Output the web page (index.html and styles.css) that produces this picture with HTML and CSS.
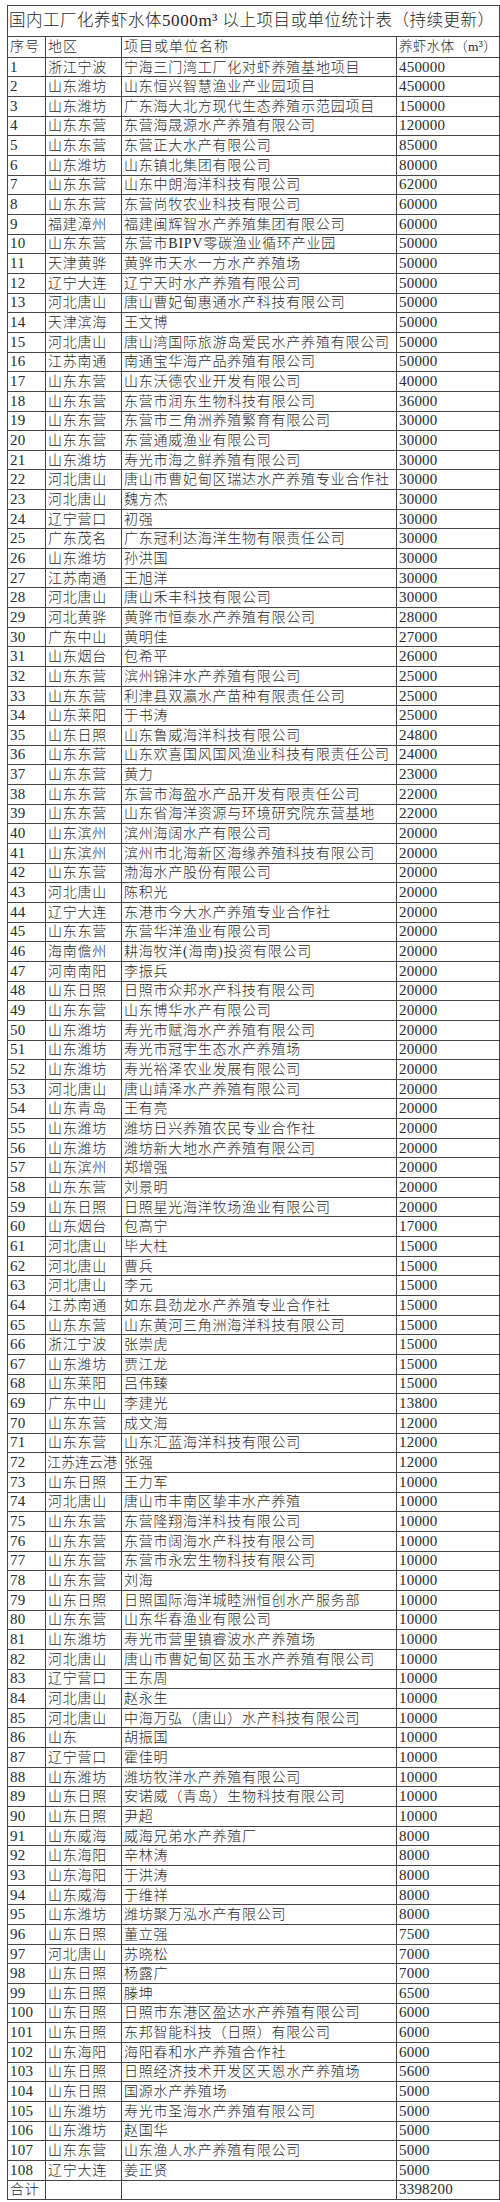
FILE: index.html
```html
<!DOCTYPE html>
<html lang="zh-CN">
<head>
<meta charset="utf-8">
<title>国内工厂化养虾水体5000m³以上项目或单位统计表</title>
<link rel="stylesheet" href="styles.css">
</head>
<body>
<table class="sheet">
<colgroup><col class="c1"><col class="c2"><col class="c3"><col class="c4"></colgroup>
<tbody>
<tr class="title-row"><td colspan="4" class="title">国内工厂化养虾水体<span class="tnum">5000m³</span> 以上项目或单位统计表（持续更新）</td></tr>
<tr class="head"><td>序号</td><td>地区</td><td>项目或单位名称</td><td class="hv">养虾水体（m³）</td></tr>
<tr><td class="n">1</td><td>浙江宁波</td><td>宁海三门湾工厂化对虾养殖基地项目</td><td class="n">450000</td></tr>
<tr><td class="n">2</td><td>山东潍坊</td><td>山东恒兴智慧渔业产业园项目</td><td class="n">450000</td></tr>
<tr><td class="n">3</td><td>山东潍坊</td><td>广东海大北方现代生态养殖示范园项目</td><td class="n">150000</td></tr>
<tr><td class="n">4</td><td>山东东营</td><td>东营海晟源水产养殖有限公司</td><td class="n">120000</td></tr>
<tr><td class="n">5</td><td>山东东营</td><td>东营正大水产有限公司</td><td class="n">85000</td></tr>
<tr><td class="n">6</td><td>山东潍坊</td><td>山东镇北集团有限公司</td><td class="n">80000</td></tr>
<tr><td class="n">7</td><td>山东东营</td><td>山东中朗海洋科技有限公司</td><td class="n">62000</td></tr>
<tr><td class="n">8</td><td>山东东营</td><td>东营尚牧农业科技有限公司</td><td class="n">60000</td></tr>
<tr><td class="n">9</td><td>福建漳州</td><td>福建闽辉智水产养殖集团有限公司</td><td class="n">60000</td></tr>
<tr><td class="n">10</td><td>山东东营</td><td>东营市BIPV零碳渔业循环产业园</td><td class="n">50000</td></tr>
<tr><td class="n">11</td><td>天津黄骅</td><td>黄骅市天水一方水产养殖场</td><td class="n">50000</td></tr>
<tr><td class="n">12</td><td>辽宁大连</td><td>辽宁天时水产养殖有限公司</td><td class="n">50000</td></tr>
<tr><td class="n">13</td><td>河北唐山</td><td>唐山曹妃甸惠通水产科技有限公司</td><td class="n">50000</td></tr>
<tr><td class="n">14</td><td>天津滨海</td><td>王文博</td><td class="n">50000</td></tr>
<tr><td class="n">15</td><td>河北唐山</td><td>唐山湾国际旅游岛爱民水产养殖有限公司</td><td class="n">50000</td></tr>
<tr><td class="n">16</td><td>江苏南通</td><td>南通宝华海产品养殖有限公司</td><td class="n">50000</td></tr>
<tr><td class="n">17</td><td>山东东营</td><td>山东沃德农业开发有限公司</td><td class="n">40000</td></tr>
<tr><td class="n">18</td><td>山东东营</td><td>东营市润东生物科技有限公司</td><td class="n">36000</td></tr>
<tr><td class="n">19</td><td>山东东营</td><td>东营市三角洲养殖繁育有限公司</td><td class="n">30000</td></tr>
<tr><td class="n">20</td><td>山东东营</td><td>东营通威渔业有限公司</td><td class="n">30000</td></tr>
<tr><td class="n">21</td><td>山东潍坊</td><td>寿光市海之鲜养殖有限公司</td><td class="n">30000</td></tr>
<tr><td class="n">22</td><td>河北唐山</td><td>唐山市曹妃甸区瑞达水产养殖专业合作社</td><td class="n">30000</td></tr>
<tr><td class="n">23</td><td>河北唐山</td><td>魏方杰</td><td class="n">30000</td></tr>
<tr><td class="n">24</td><td>辽宁营口</td><td>初强</td><td class="n">30000</td></tr>
<tr><td class="n">25</td><td>广东茂名</td><td>广东冠利达海洋生物有限责任公司</td><td class="n">30000</td></tr>
<tr><td class="n">26</td><td>山东潍坊</td><td>孙洪国</td><td class="n">30000</td></tr>
<tr><td class="n">27</td><td>江苏南通</td><td>王旭洋</td><td class="n">30000</td></tr>
<tr><td class="n">28</td><td>河北唐山</td><td>唐山禾丰科技有限公司</td><td class="n">30000</td></tr>
<tr><td class="n">29</td><td>河北黄骅</td><td>黄骅市恒泰水产养殖有限公司</td><td class="n">28000</td></tr>
<tr><td class="n">30</td><td>广东中山</td><td>黄明佳</td><td class="n">27000</td></tr>
<tr><td class="n">31</td><td>山东烟台</td><td>包希平</td><td class="n">26000</td></tr>
<tr><td class="n">32</td><td>山东东营</td><td>滨州锦沣水产养殖有限公司</td><td class="n">25000</td></tr>
<tr><td class="n">33</td><td>山东东营</td><td>利津县双瀛水产苗种有限责任公司</td><td class="n">25000</td></tr>
<tr><td class="n">34</td><td>山东莱阳</td><td>于书涛</td><td class="n">25000</td></tr>
<tr><td class="n">35</td><td>山东日照</td><td>山东鲁威海洋科技有限公司</td><td class="n">24800</td></tr>
<tr><td class="n">36</td><td>山东东营</td><td>山东欢喜国风国风渔业科技有限责任公司</td><td class="n">24000</td></tr>
<tr><td class="n">37</td><td>山东东营</td><td>黄力</td><td class="n">23000</td></tr>
<tr><td class="n">38</td><td>山东东营</td><td>东营市海盈水产品开发有限责任公司</td><td class="n">22000</td></tr>
<tr><td class="n">39</td><td>山东东营</td><td>山东省海洋资源与环境研究院东营基地</td><td class="n">22000</td></tr>
<tr><td class="n">40</td><td>山东滨州</td><td>滨州海阔水产有限公司</td><td class="n">20000</td></tr>
<tr><td class="n">41</td><td>山东滨州</td><td>滨州市北海新区海缘养殖科技有限公司</td><td class="n">20000</td></tr>
<tr><td class="n">42</td><td>山东东营</td><td>渤海水产股份有限公司</td><td class="n">20000</td></tr>
<tr><td class="n">43</td><td>河北唐山</td><td>陈积光</td><td class="n">20000</td></tr>
<tr><td class="n">44</td><td>辽宁大连</td><td>东港市今大水产养殖专业合作社</td><td class="n">20000</td></tr>
<tr><td class="n">45</td><td>山东东营</td><td>东营华洋渔业有限公司</td><td class="n">20000</td></tr>
<tr><td class="n">46</td><td>海南儋州</td><td>耕海牧洋(海南)投资有限公司</td><td class="n">20000</td></tr>
<tr><td class="n">47</td><td>河南南阳</td><td>李振兵</td><td class="n">20000</td></tr>
<tr><td class="n">48</td><td>山东日照</td><td>日照市众邦水产科技有限公司</td><td class="n">20000</td></tr>
<tr><td class="n">49</td><td>山东东营</td><td>山东博华水产有限公司</td><td class="n">20000</td></tr>
<tr><td class="n">50</td><td>山东潍坊</td><td>寿光市赋海水产养殖有限公司</td><td class="n">20000</td></tr>
<tr><td class="n">51</td><td>山东潍坊</td><td>寿光市冠宇生态水产养殖场</td><td class="n">20000</td></tr>
<tr><td class="n">52</td><td>山东潍坊</td><td>寿光裕泽农业发展有限公司</td><td class="n">20000</td></tr>
<tr><td class="n">53</td><td>河北唐山</td><td>唐山靖泽水产养殖有限公司</td><td class="n">20000</td></tr>
<tr><td class="n">54</td><td>山东青岛</td><td>王有亮</td><td class="n">20000</td></tr>
<tr><td class="n">55</td><td>山东潍坊</td><td>潍坊日兴养殖农民专业合作社</td><td class="n">20000</td></tr>
<tr><td class="n">56</td><td>山东潍坊</td><td>潍坊新大地水产养殖有限公司</td><td class="n">20000</td></tr>
<tr><td class="n">57</td><td>山东滨州</td><td>郑增强</td><td class="n">20000</td></tr>
<tr><td class="n">58</td><td>山东东营</td><td>刘景明</td><td class="n">20000</td></tr>
<tr><td class="n">59</td><td>山东日照</td><td>日照星光海洋牧场渔业有限公司</td><td class="n">20000</td></tr>
<tr><td class="n">60</td><td>山东烟台</td><td>包高宁</td><td class="n">17000</td></tr>
<tr><td class="n">61</td><td>河北唐山</td><td>毕大柱</td><td class="n">15000</td></tr>
<tr><td class="n">62</td><td>河北唐山</td><td>曹兵</td><td class="n">15000</td></tr>
<tr><td class="n">63</td><td>河北唐山</td><td>李元</td><td class="n">15000</td></tr>
<tr><td class="n">64</td><td>江苏南通</td><td>如东县劲龙水产养殖专业合作社</td><td class="n">15000</td></tr>
<tr><td class="n">65</td><td>山东东营</td><td>山东黄河三角洲海洋科技有限公司</td><td class="n">15000</td></tr>
<tr><td class="n">66</td><td>浙江宁波</td><td>张崇虎</td><td class="n">15000</td></tr>
<tr><td class="n">67</td><td>山东潍坊</td><td>贾江龙</td><td class="n">15000</td></tr>
<tr><td class="n">68</td><td>山东莱阳</td><td>吕伟臻</td><td class="n">15000</td></tr>
<tr><td class="n">69</td><td>广东中山</td><td>李建光</td><td class="n">13800</td></tr>
<tr><td class="n">70</td><td>山东东营</td><td>成文海</td><td class="n">12000</td></tr>
<tr><td class="n">71</td><td>山东东营</td><td>山东汇蓝海洋科技有限公司</td><td class="n">12000</td></tr>
<tr><td class="n">72</td><td class="tight">江苏连云港</td><td>张强</td><td class="n">12000</td></tr>
<tr><td class="n">73</td><td>山东日照</td><td>王力军</td><td class="n">10000</td></tr>
<tr><td class="n">74</td><td>河北唐山</td><td>唐山市丰南区挚丰水产养殖</td><td class="n">10000</td></tr>
<tr><td class="n">75</td><td>山东东营</td><td>东营隆翔海洋科技有限公司</td><td class="n">10000</td></tr>
<tr><td class="n">76</td><td>山东东营</td><td>东营市阔海水产科技有限公司</td><td class="n">10000</td></tr>
<tr><td class="n">77</td><td>山东东营</td><td>东营市永宏生物科技有限公司</td><td class="n">10000</td></tr>
<tr><td class="n">78</td><td>山东东营</td><td>刘海</td><td class="n">10000</td></tr>
<tr><td class="n">79</td><td>山东日照</td><td>日照国际海洋城睦洲恒创水产服务部</td><td class="n">10000</td></tr>
<tr><td class="n">80</td><td>山东东营</td><td>山东华春渔业有限公司</td><td class="n">10000</td></tr>
<tr><td class="n">81</td><td>山东潍坊</td><td>寿光市营里镇睿波水产养殖场</td><td class="n">10000</td></tr>
<tr><td class="n">82</td><td>河北唐山</td><td>唐山市曹妃甸区茹玉水产养殖有限公司</td><td class="n">10000</td></tr>
<tr><td class="n">83</td><td>辽宁营口</td><td>王东周</td><td class="n">10000</td></tr>
<tr><td class="n">84</td><td>河北唐山</td><td>赵永生</td><td class="n">10000</td></tr>
<tr><td class="n">85</td><td>河北唐山</td><td>中海万弘（唐山）水产科技有限公司</td><td class="n">10000</td></tr>
<tr><td class="n">86</td><td>山东</td><td>胡振国</td><td class="n">10000</td></tr>
<tr><td class="n">87</td><td>辽宁营口</td><td>霍佳明</td><td class="n">10000</td></tr>
<tr><td class="n">88</td><td>山东潍坊</td><td>潍坊牧洋水产养殖有限公司</td><td class="n">10000</td></tr>
<tr><td class="n">89</td><td>山东日照</td><td>安诺威（青岛）生物科技有限公司</td><td class="n">10000</td></tr>
<tr><td class="n">90</td><td>山东日照</td><td>尹超</td><td class="n">10000</td></tr>
<tr><td class="n">91</td><td>山东威海</td><td>威海兄弟水产养殖厂</td><td class="n">8000</td></tr>
<tr><td class="n">92</td><td>山东海阳</td><td>辛林涛</td><td class="n">8000</td></tr>
<tr><td class="n">93</td><td>山东海阳</td><td>于洪涛</td><td class="n">8000</td></tr>
<tr><td class="n">94</td><td>山东威海</td><td>于维祥</td><td class="n">8000</td></tr>
<tr><td class="n">95</td><td>山东潍坊</td><td>潍坊聚万泓水产有限公司</td><td class="n">8000</td></tr>
<tr><td class="n">96</td><td>山东日照</td><td>董立强</td><td class="n">7500</td></tr>
<tr><td class="n">97</td><td>河北唐山</td><td>苏晓松</td><td class="n">7000</td></tr>
<tr><td class="n">98</td><td>山东日照</td><td>杨露广</td><td class="n">7000</td></tr>
<tr><td class="n">99</td><td>山东日照</td><td>滕坤</td><td class="n">6500</td></tr>
<tr><td class="n">100</td><td>山东日照</td><td>日照市东港区盈达水产养殖有限公司</td><td class="n">6000</td></tr>
<tr><td class="n">101</td><td>山东日照</td><td>东邦智能科技（日照）有限公司</td><td class="n">6000</td></tr>
<tr><td class="n">102</td><td>山东海阳</td><td>海阳春和水产养殖合作社</td><td class="n">6000</td></tr>
<tr><td class="n">103</td><td>山东日照</td><td>日照经济技术开发区天恩水产养殖场</td><td class="n">5600</td></tr>
<tr><td class="n">104</td><td>山东日照</td><td>国源水产养殖场</td><td class="n">5000</td></tr>
<tr><td class="n">105</td><td>山东潍坊</td><td>寿光市圣海水产养殖有限公司</td><td class="n">5000</td></tr>
<tr><td class="n">106</td><td>山东潍坊</td><td>赵国华</td><td class="n">5000</td></tr>
<tr><td class="n">107</td><td>山东东营</td><td>山东渔人水产养殖有限公司</td><td class="n">5000</td></tr>
<tr><td class="n">108</td><td>辽宁大连</td><td>姜正贤</td><td class="n">5000</td></tr>
<tr><td>合计</td><td></td><td></td><td class="n">3398200</td></tr>
</tbody>
</table>
</body>
</html>
```

FILE: styles.css
```css
html, body {
  margin: 0;
  padding: 0;
  background: #ffffff;
}

body {
  font-family: "Liberation Serif", "Noto Sans CJK SC", serif;
  color: #2a2a2a;
}

.sheet {
  margin: 5px 0 0 7px;
  border-collapse: collapse;
  table-layout: fixed;
  width: 492px;
}

.c1 { width: 38px; }
.c2 { width: 76px; }
.c3 { width: 275px; }
.c4 { width: 103px; }

.sheet tr {
  height: 19.66px;
}

.sheet td {
  border: 1px solid #454545;
  padding: 0 0 0 2px;
  white-space: nowrap;
  overflow: visible;
  font-size: 14px;
  font-weight: 300;
  letter-spacing: 0.76px;
  line-height: 17px;
  vertical-align: middle;
}

.sheet td.n {
  font-size: 15px;
  letter-spacing: 0.2px;
}

.sheet td.tight {
  letter-spacing: 0;
  padding-left: 1px;
}

.sheet .title-row {
  height: 31px;
}

.sheet td.title {
  font-size: 16.5px;
  letter-spacing: 0.5px;
  padding-left: 1px;
  line-height: 20px;
  color: #1e1e1e;
}

.tnum {
  font-size: 17px;
  letter-spacing: 0.6px;
}

.sheet .head {
  height: 20.7px;
}

.sheet .head td {
  font-size: 14px;
  letter-spacing: 1px;
}

.sheet .head td.hv {
  font-size: 13.5px;
  letter-spacing: 0.3px;
}
```
